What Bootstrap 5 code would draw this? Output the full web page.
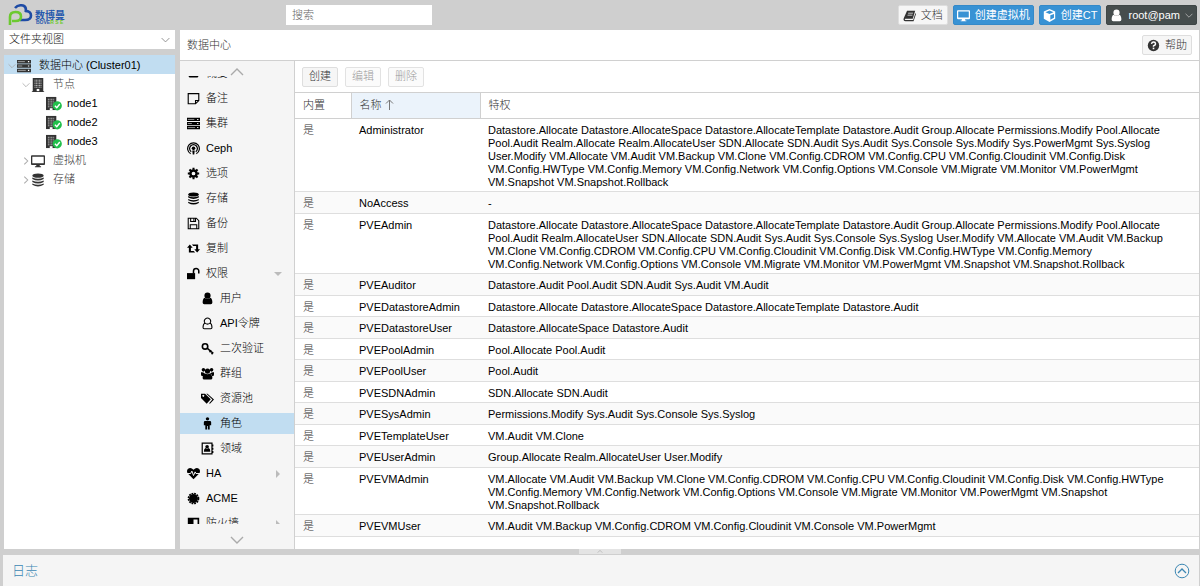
<!DOCTYPE html>
<html lang="zh-CN">
<head>
<meta charset="utf-8">
<meta name="viewport" content="width=device-width, initial-scale=1">
<title>数据中心</title>
<link href="https://cdn.jsdelivr.net/npm/bootstrap@5.3.0/dist/css/bootstrap.min.css" rel="stylesheet">
<style>
body{font:300 11px/13px "Liberation Sans","Noto Sans CJK SC",sans-serif;color:#000;background:#cfcfcf;overflow:hidden}
svg{fill:currentColor;flex:none;width:13px;height:13px}
.ln{fill:none;stroke:currentColor}
.zh{color:#333}
a{color:inherit;text-decoration:none}
.topbar{height:30px}
.logo{width:60px;height:22px}
.search,.view{font-size:11px;font-weight:300;border:0;border-radius:0;background:#fff;color:#222}
.search{width:146px;height:20px;padding:0 6px;margin-left:218px}
.search::placeholder{color:#666}
.btn{--bs-btn-font-size:11px;--bs-btn-line-height:13px;--bs-btn-font-weight:300;--bs-btn-padding-y:0;--bs-btn-padding-x:4px;--bs-btn-border-radius:2px;height:20px;display:flex;align-items:center;gap:5px;white-space:nowrap}
.btns{gap:5px;padding-right:3px}
.b-light{--bs-btn-bg:#f6f6f6;--bs-btn-border-color:#dedede;--bs-btn-color:#333;--bs-btn-disabled-color:#555;--bs-btn-disabled-border-color:#d0d0d0;--bs-btn-disabled-bg:#f9f9f9;--bs-btn-disabled-opacity:.6}
.b-blue{--bs-btn-bg:#3892d4;--bs-btn-border-color:#3489c8;--bs-btn-color:#fff;--bs-btn-padding-x:3px}
.b-blue,.b-dark{font-weight:400}
.b-dark{--bs-btn-bg:#464d4d;--bs-btn-border-color:#3f4646;--bs-btn-color:#fff;--bs-btn-padding-x:3px}
.b-dark .arr{width:8px;height:5px;color:#bbb}
.west{width:171px}
.view{height:19px;padding:0 5px;appearance:none}
.view-arr{position:absolute;right:5px;top:7px;width:9px;height:6px;color:#888;pointer-events:none}
.tree-box{margin-top:6px}
.tree a{height:19px;display:flex;align-items:center;padding:2px 0 0 4px}
.tree .lv1{padding-left:18px}
.tree .lv2{padding-left:41px}
.tree svg{width:14px;height:14px;color:#333}
.tree .lv2 svg{width:17px;height:15px}
.tree .chev{width:8px;height:8px;color:#aaa;margin-right:1px}
.tree .txt{margin-left:8px}
.tree .lv2 .txt{margin-left:5px}
.sel{background:#c1ddf1}
.panel{margin-left:5px;margin-right:1px;min-width:0}
.titlebar{height:31px;border-bottom:1px solid #d0d0d0;padding:0 7px}
.side{width:115px;background:#f5f5f5;border-right:1px solid #d0d0d0}
.scroller{color:#aaa;height:15px}
.scroller.down{height:25px;padding-bottom:5px}
.scroller svg{width:14px;height:8px}
.items{margin-top:-15px}
.items a{height:25px;display:flex;align-items:center;padding:0 12px 0 7px}
.items .sub{height:21px;margin:2px 0;padding-left:21px}
.items svg{margin-right:6px}
.items svg.tri{width:8px;height:8px;color:#bbb;margin:0 0 0 auto}
.tools{height:31px;padding:0 7px;gap:7px}
.tools .btn{--bs-btn-padding-x:6px}
.grid{table-layout:fixed;width:100%}
.grid th{font-weight:300;color:#333;height:26px;padding:0 8px;border:solid #d0d0d0;border-width:1px 1px 1px 0}
.grid th:last-child{border-right:0}
.grid td{padding:5px 8px 2px;vertical-align:top;border-bottom:1px solid #dedede}
.grid td:first-child{color:#333}
.grid td:last-child{padding-right:14px}
.grid tr:nth-child(even) td{padding-bottom:3px;background:#fafafa}
.grid .c1{width:56px}.grid .c2{width:129px}
.grid .sorted{background:#ebf3fb}
.grid th svg{width:9px;height:11px;margin-left:3px;color:#777;vertical-align:-1px}
.splitter{height:6px}
.handle{width:42px;height:5px;background:#e4e4e4;color:#999}
.handle svg{width:6px;height:3px}
.log{height:31px;background:#f5f5f5;color:#3c87b3;margin:0 1px 0 3px;padding:0 9px;font-size:13px}
.log svg{width:16px;height:16px}
</style>
</head>
<body class="d-flex flex-column vh-100">
<svg class="d-none" aria-hidden="true">
<symbol id="book" viewBox="0 0 16 16"><path d="M5 2h10l-3 10H3c-1 0-1 1.500 0 1.500h9.500L15.300 5l.7 1-3 9H3c-2 0-3-2-2-4zM6.500 4.500l-.4 1h6l.4-1zM5.800 7l-.4 1h6l.4-1z" fill-rule="evenodd"/></symbol>
<symbol id="screen" viewBox="0 0 16 16"><path d="M1 1.500h14a1 1 0 0 1 1 1v9a1 1 0 0 1-1 1H10v1.500h1.500V15h-7v-1H6v-1.500H1a1 1 0 0 1-1-1v-9a1 1 0 0 1 1-1zM1.500 3v7.500h13V3z" fill-rule="evenodd"/></symbol>
<symbol id="cube" viewBox="0 0 16 16"><path d="M8 0l7 3v9l-7 4-7-4V3zM8 1.800L3 4l5 2 5-2zM9 7.800v5.500l4.500-2.500V6z" fill-rule="evenodd"/></symbol>
<symbol id="user" viewBox="0 0 16 16"><circle cx="8" cy="4.500" r="3.800"/><path d="M4.500 7Q8 10.500 11.500 7 14 8 14 13q0 2-2 2H4q-2 0-2-2 0-5 2.500-6z"/></symbol>
<symbol id="usero" viewBox="0 0 16 16"><path class="ln" stroke-width="1.300" d="M5 7.500Q2.500 8.500 2.500 13q0 1.500 1.500 1.500h8q1.500 0 1.500-1.500 0-4.500-2.500-5.500M5 7.500a3.800 3.800 0 1 1 6 0Q8 10 5 7.500z"/></symbol>
<symbol id="help" viewBox="0 0 16 16"><circle cx="8" cy="8" r="7"/><path d="M5.500 6Q6 3.800 8.200 3.800T10.500 6Q10.500 7.200 8 8.500v1" fill="none" stroke="#fff" stroke-width="1.800"/><path d="M7 10.600h2v2H7z" fill="#fff"/></symbol>
<symbol id="cdown" viewBox="0 0 14 8"><path class="ln" d="M1 1l6 6 6-6" stroke-width="1.400"/></symbol>
<symbol id="cup" viewBox="0 0 14 8"><path class="ln" d="M1 7l6-6 6 6" stroke-width="1.400"/></symbol>
<symbol id="cright" viewBox="0 0 14 14"><path class="ln" d="M4 1l6 6-6 6" stroke-width="1.800"/></symbol>
<symbol id="sortup" viewBox="0 0 9 11"><path class="ln" d="M4.500 11V1M1 4.500L4.500 1 8 4.500"/></symbol>
<symbol id="server" viewBox="0 0 16 16"><path d="M0 1h16v4H0zM0 6h16v4H0zM0 11h16v4H0z"/><path d="M1 3h8M1 8h5M1 13h9" stroke="#aaa"/><path d="M12.500 3h1.500M12.500 8h1.500M12.500 13h1.500" stroke="#fff" stroke-width="1.300"/></symbol>
<symbol id="bldg" viewBox="0 0 16 16"><path d="M2 0h12v15h1v1H1v-1h1z"/><path d="M4 2.500h8M4 4.500h8M4 6.500h8M4 8.500h8M4 10.500h8" stroke="#ccc" stroke-dasharray="1.200 .5"/><path d="M6.500 12.500h3V15h-3z" fill="#fff"/></symbol>
<symbol id="node" viewBox="0 0 18 16"><path d="M1 1h11v14H1z"/><path d="M3 3.500h7M3 5.500h7M3 7.500h7M3 9.500h7M3 11.500h7" stroke="#bbb" stroke-dasharray="1.200 .5"/><path d="M5 13h3v2H5z" fill="#fff"/><circle cx="13" cy="10.500" r="4.900" fill="#21bf4b"/><path d="M10.500 10.500l2 2 3.200-4" fill="none" stroke="#fff" stroke-width="1.500"/></symbol>
<symbol id="db" viewBox="0 0 16 16"><ellipse cx="8" cy="3" rx="6.500" ry="2.500"/><path d="M1.500 5Q8 8 14.500 5v1.800Q8 10.400 1.500 6.800zM1.500 8.500Q8 11.500 14.500 8.500v1.800Q8 13.900 1.500 10.300zM1.500 12Q8 15 14.500 12v1.500Q8 17.400 1.500 13.500z"/></symbol>
<symbol id="note" viewBox="0 0 16 16"><path class="ln" stroke-width="1.400" d="M1.500 2h13v8.500l-4 4h-9zM14 10.500h-3.500V14"/></symbol>
<symbol id="ceph" viewBox="0 0 16 16"><path class="ln" stroke-width="1.500" d="M4.500 14.500a7.200 7.200 0 1 1 7 0M5.200 12A4.800 4.800 0 1 1 10.800 12"/><circle cx="8" cy="7.800" r="2.200"/><path d="M6.500 10.500h3l-.6 5H7.100z"/></symbol>
<symbol id="gear" viewBox="0 0 16 16"><circle class="ln" cx="8" cy="8" r="3.800" stroke-width="3"/><path class="ln" stroke-width="2.500" d="M8 1v2.500M8 12.500V15M1 8h2.500M12.500 8H15M3 3l2 2M11 11l2 2M3 13l2-2M11 5l2-2"/></symbol>
<symbol id="floppy" viewBox="0 0 16 16"><path class="ln" stroke-width="1.300" d="M1.500 1.500h10l3 3v10h-13zM4.500 1.500v4h6v-4M4 14.500v-5h8v5M8.500 2v3"/></symbol>
<symbol id="retweet" viewBox="0 0 16 16"><path d="M3.500 3L0 7h2.300v6H10L8.300 11H4.800V7H7zM12.500 13L16 9h-2.300V3H6l1.700 2h3.500v4H9z"/></symbol>
<symbol id="unlock" viewBox="0 0 16 16"><path d="M0 7.500h10V15H0z"/><path class="ln" stroke-width="1.900" d="M8 8V5a3.200 3.200 0 0 1 6.500 0v3"/></symbol>
<symbol id="key" viewBox="0 0 16 16"><circle class="ln" cx="5" cy="5.500" r="3.300" stroke-width="2"/><path class="ln" stroke-width="1.900" d="M7.500 7.500l7 6M10.500 12.500l2-2.500M13 15l2-2.500"/></symbol>
<symbol id="users" viewBox="0 0 16 16"><circle cx="3" cy="3.500" r="2.200"/><circle cx="13" cy="3.500" r="2.200"/><circle cx="8" cy="5" r="3.200"/><path d="M0 6.500Q3 6 4.500 8L2.500 11H1Q0 11 0 9zM16 6.500Q13 6 11.500 8L13.500 11H15q1 0 1-2zM5 8q3 2 6 0 3 1 3 5.500Q14 15.500 12 15.500H4Q2 15.500 2 13.500 2 9 5 8z"/></symbol>
<symbol id="tags" viewBox="0 0 16 16"><path d="M0 2h5l7 7-5 5.500L0 7.500zM2.800 3.500a1.200 1.200 0 1 0 .1 0zM6.500 2H8l8 7.300-5 5.200-1-.8L14 9.300z" fill-rule="evenodd"/></symbol>
<symbol id="male" viewBox="0 0 16 16"><circle cx="8" cy="2.300" r="2.100"/><path d="M5 5h6q1.500 0 1.500 1.500V10h-1.800V7.500v8h-2.200V11h-1v4.500H5.300v-8V10H3.500V6.500Q3.500 5 5 5z"/></symbol>
<symbol id="abook" viewBox="0 0 16 16"><path class="ln" stroke-width="1.500" d="M1.500 1.500h12v13h-12zM14.500 3v2.500M14.500 7v2.500M14.500 11v2.500"/><circle cx="7.500" cy="5.800" r="2.200"/><path d="M5.500 7.500q2 1.500 4 0 2 1 2 4.500h-8q0-3.500 2-4.500z"/></symbol>
<symbol id="heart" viewBox="0 0 16 16"><path d="M8 15L1 8Q-1 5 1 2.500 4.500-.500 8 3.500 11.500-.500 15 2.500 17 5 15 8z"/><path d="M0 8h4.500L6 5l2 5.500L10 6l1 2h5" fill="none" stroke="#f5f5f5" stroke-width="1.200"/></symbol>
<symbol id="cert" viewBox="0 0 16 16"><circle cx="8" cy="8" r="5.500"/><circle class="ln" cx="8" cy="8" r="6.200" stroke-width="2" stroke-dasharray="2.200 1.050"/></symbol>
<symbol id="shield" viewBox="0 0 16 16"><path d="M1 1h14v8q-2 4-7 6.500Q3 13 1 9zM8 3v10q4-2 5-4.500V3z" fill-rule="evenodd"/></symbol>
<symbol id="summary" viewBox="0 0 16 16"><path d="M1 1h14v9l-2 3H3l-2-3zM2.500 3v7.500h11V3z" fill-rule="evenodd"/></symbol>
<symbol id="tdown" viewBox="0 0 8 8"><path d="M0 2h8L4 6z"/></symbol>
<symbol id="tright" viewBox="0 0 8 8"><path d="M2 0v8l4-4z"/></symbol>
<symbol id="circup" viewBox="0 0 16 16"><circle class="ln" cx="8" cy="8" r="6.800"/><path class="ln" d="M4 10l4-4 4 4" stroke-width="1.300"/></symbol>
</svg>

<header class="topbar d-flex align-items-center ps-2 flex-shrink-0">
<svg class="logo" viewBox="0 0 60 22" role="img" aria-label="数博曼"><g fill="none" stroke-width="2.600"><path stroke="#1e4ba5" d="M7 4q3-3.500 8-2.500 4 1.500 2.500 6.500M17 7q6 0 6 4.500T17 16h-5"/><path stroke="#6cc930" d="M2 21v-8q0-5 5.500-5t5.500 4.500T7.500 17H4"/></g><text x="27" y="15" font-size="10" font-weight="700" fill="#2659ad">数博曼</text><text x="28" y="20" font-size="5" font-weight="700" fill="#2659ad">BOVE<tspan fill="#6cc930">R S E</tspan></text></svg>
<input class="search form-control" type="search" placeholder="搜索" aria-label="搜索">
<div class="btns d-flex ms-auto">
<button class="btn b-light"><svg><use href="#book"/></svg>文档</button>
<button class="btn b-blue"><svg><use href="#screen"/></svg>创建虚拟机</button>
<button class="btn b-blue"><svg><use href="#cube"/></svg>创建CT</button>
<button class="btn b-dark"><svg><use href="#user"/></svg>root@pam<svg class="arr"><use href="#cdown"/></svg></button>
</div>
</header>

<main class="d-flex flex-grow-1 ps-1 overflow-hidden">
<aside class="west d-flex flex-column flex-shrink-0">
<div class="position-relative">
<select class="view w-100 d-block" aria-label="视图"><option>文件夹视图</option></select>
<svg class="view-arr"><use href="#cdown"/></svg>
</div>
<nav class="tree tree-box bg-white flex-grow-1">
<a href="#" class="sel"><svg class="chev"><use href="#cdown"/></svg><svg><use href="#server"/></svg><span class="txt">数据中心 (Cluster01)</span></a>
<a href="#" class="lv1 zh"><svg class="chev"><use href="#cdown"/></svg><svg><use href="#bldg"/></svg><span class="txt">节点</span></a>
<a href="#" class="lv2"><svg><use href="#node"/></svg><span class="txt">node1</span></a>
<a href="#" class="lv2"><svg><use href="#node"/></svg><span class="txt">node2</span></a>
<a href="#" class="lv2"><svg><use href="#node"/></svg><span class="txt">node3</span></a>
<a href="#" class="lv1 zh"><svg class="chev"><use href="#cright"/></svg><svg><use href="#screen"/></svg><span class="txt">虚拟机</span></a>
<a href="#" class="lv1 zh"><svg class="chev"><use href="#cright"/></svg><svg><use href="#db"/></svg><span class="txt">存储</span></a>
</nav>
</aside>

<section class="panel bg-white flex-grow-1 d-flex flex-column">
<div class="titlebar d-flex align-items-center justify-content-between flex-shrink-0 zh"><span>数据中心</span><button class="btn b-light"><svg><use href="#help"/></svg>帮助</button></div>
<div class="d-flex flex-grow-1 overflow-hidden">
<div class="side d-flex flex-column flex-shrink-0">
<div class="scroller d-flex justify-content-center align-items-end flex-shrink-0"><svg><use href="#cup"/></svg></div>
<div class="flex-grow-1 overflow-hidden">
<nav class="items d-flex flex-column">
<a href="#"><svg><use href="#summary"/></svg>概要</a>
<a href="#"><svg><use href="#note"/></svg>备注</a>
<a href="#"><svg><use href="#server"/></svg>集群</a>
<a href="#"><svg><use href="#ceph"/></svg>Ceph</a>
<a href="#"><svg><use href="#gear"/></svg>选项</a>
<a href="#"><svg><use href="#db"/></svg>存储</a>
<a href="#"><svg><use href="#floppy"/></svg>备份</a>
<a href="#"><svg><use href="#retweet"/></svg>复制</a>
<a href="#"><svg><use href="#unlock"/></svg>权限<svg class="tri"><use href="#tdown"/></svg></a>
<a href="#" class="sub"><svg><use href="#user"/></svg>用户</a>
<a href="#" class="sub"><svg><use href="#usero"/></svg>API令牌</a>
<a href="#" class="sub"><svg><use href="#key"/></svg>二次验证</a>
<a href="#" class="sub"><svg><use href="#users"/></svg>群组</a>
<a href="#" class="sub"><svg><use href="#tags"/></svg>资源池</a>
<a href="#" class="sub sel"><svg><use href="#male"/></svg>角色</a>
<a href="#" class="sub"><svg><use href="#abook"/></svg>领域</a>
<a href="#"><svg><use href="#heart"/></svg>HA<svg class="tri"><use href="#tright"/></svg></a>
<a href="#"><svg><use href="#cert"/></svg>ACME</a>
<a href="#"><svg><use href="#shield"/></svg>防火墙<svg class="tri"><use href="#tright"/></svg></a>
</nav>
</div>
<div class="scroller down d-flex justify-content-center align-items-end flex-shrink-0"><svg><use href="#cdown"/></svg></div>
</div>
<div class="flex-grow-1 overflow-hidden">
<div class="tools d-flex align-items-center"><button class="btn b-light">创建</button><button class="btn b-light" disabled>编辑</button><button class="btn b-light" disabled>删除</button></div>
<table class="grid">
<colgroup><col class="c1"><col class="c2"><col></colgroup>
<thead><tr><th>内置</th><th class="sorted">名称<svg><use href="#sortup"/></svg></th><th>特权</th></tr></thead>
<tbody>
<tr><td>是</td><td>Administrator</td><td>Datastore.Allocate Datastore.AllocateSpace Datastore.AllocateTemplate Datastore.Audit Group.Allocate Permissions.Modify Pool.Allocate Pool.Audit Realm.Allocate Realm.AllocateUser SDN.Allocate SDN.Audit Sys.Audit Sys.Console Sys.Modify Sys.PowerMgmt Sys.Syslog User.Modify VM.Allocate VM.Audit VM.Backup VM.Clone VM.Config.CDROM VM.Config.CPU VM.Config.Cloudinit VM.Config.Disk VM.Config.HWType VM.Config.Memory VM.Config.Network VM.Config.Options VM.Console VM.Migrate VM.Monitor VM.PowerMgmt VM.Snapshot VM.Snapshot.Rollback</td></tr>
<tr><td>是</td><td>NoAccess</td><td>-</td></tr>
<tr><td>是</td><td>PVEAdmin</td><td>Datastore.Allocate Datastore.AllocateSpace Datastore.AllocateTemplate Datastore.Audit Group.Allocate Permissions.Modify Pool.Allocate Pool.Audit Realm.AllocateUser SDN.Allocate SDN.Audit Sys.Audit Sys.Console Sys.Syslog User.Modify VM.Allocate VM.Audit VM.Backup VM.Clone VM.Config.CDROM VM.Config.CPU VM.Config.Cloudinit VM.Config.Disk VM.Config.HWType VM.Config.Memory VM.Config.Network VM.Config.Options VM.Console VM.Migrate VM.Monitor VM.PowerMgmt VM.Snapshot VM.Snapshot.Rollback</td></tr>
<tr><td>是</td><td>PVEAuditor</td><td>Datastore.Audit Pool.Audit SDN.Audit Sys.Audit VM.Audit</td></tr>
<tr><td>是</td><td>PVEDatastoreAdmin</td><td>Datastore.Allocate Datastore.AllocateSpace Datastore.AllocateTemplate Datastore.Audit</td></tr>
<tr><td>是</td><td>PVEDatastoreUser</td><td>Datastore.AllocateSpace Datastore.Audit</td></tr>
<tr><td>是</td><td>PVEPoolAdmin</td><td>Pool.Allocate Pool.Audit</td></tr>
<tr><td>是</td><td>PVEPoolUser</td><td>Pool.Audit</td></tr>
<tr><td>是</td><td>PVESDNAdmin</td><td>SDN.Allocate SDN.Audit</td></tr>
<tr><td>是</td><td>PVESysAdmin</td><td>Permissions.Modify Sys.Audit Sys.Console Sys.Syslog</td></tr>
<tr><td>是</td><td>PVETemplateUser</td><td>VM.Audit VM.Clone</td></tr>
<tr><td>是</td><td>PVEUserAdmin</td><td>Group.Allocate Realm.AllocateUser User.Modify</td></tr>
<tr><td>是</td><td>PVEVMAdmin</td><td>VM.Allocate VM.Audit VM.Backup VM.Clone VM.Config.CDROM VM.Config.CPU VM.Config.Cloudinit VM.Config.Disk VM.Config.HWType VM.Config.Memory VM.Config.Network VM.Config.Options VM.Console VM.Migrate VM.Monitor VM.PowerMgmt VM.Snapshot VM.Snapshot.Rollback</td></tr>
<tr><td>是</td><td>PVEVMUser</td><td>VM.Audit VM.Backup VM.Config.CDROM VM.Config.Cloudinit VM.Console VM.PowerMgmt</td></tr>
</tbody>
</table>
</div>
</div>
</section>
</main>
<div class="splitter d-flex justify-content-center flex-shrink-0"><div class="handle d-flex justify-content-center align-items-center"><svg><use href="#cup"/></svg></div></div>
<footer class="log d-flex align-items-center justify-content-between flex-shrink-0"><span>日志</span><svg><use href="#circup"/></svg></footer>
<script src="https://cdn.jsdelivr.net/npm/bootstrap@5.3.0/dist/js/bootstrap.bundle.min.js"></script>
</body>
</html>
